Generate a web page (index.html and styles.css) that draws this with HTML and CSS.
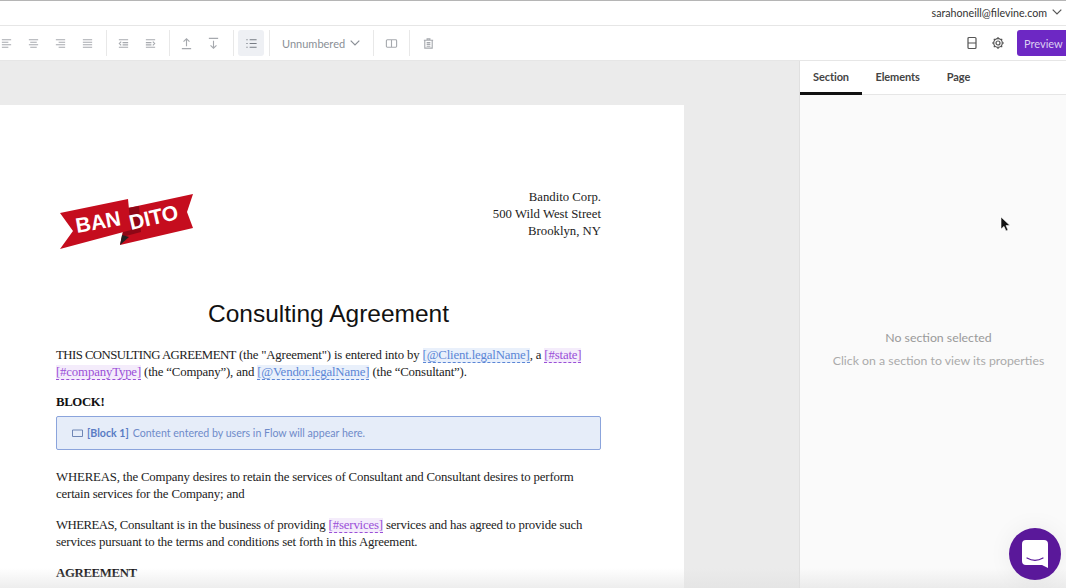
FILE: index.html
```html
<!DOCTYPE html>
<html lang="en">
<head>
<meta charset="utf-8">
<title>Consulting Agreement</title>
<link rel="stylesheet" href="styles.css">
</head>
<body>
<div class="app">
  <header class="topbar">
    <span class="email">sarahoneill@filevine.com</span>
    <svg class="caret-top" width="10" height="6" viewBox="0 0 10 6"><path d="M.7.7 5 5 9.3.7" fill="none" stroke="#555" stroke-width="1.2"/></svg>
  </header>
  <div class="toolbar">
    <div class="tool-group group-align">
      <svg class="ico" viewBox="0 0 14 14"><path d="M2 3h10M2 5.700h7M2 8.400h10M2 11h7"/></svg>
      <svg class="ico" viewBox="0 0 14 14"><path d="M2 3h10M3.500 5.700h7M2 8.400h10M3.500 11h7"/></svg>
      <svg class="ico" viewBox="0 0 14 14"><path d="M2 3h10M5 5.700h7M2 8.400h10M5 11h7"/></svg>
      <svg class="ico" viewBox="0 0 14 14"><path d="M2 3h10M2 5.700h10M2 8.400h10M2 11h10"/></svg>
    </div>
    <div class="tool-group group-indent">
      <svg class="ico" viewBox="0 0 14 14"><path d="M2 3h10M6 6h6M6 8.500h6M2 11h10M4.500 5 2.500 7l2 2"/></svg>
      <svg class="ico" viewBox="0 0 14 14"><path d="M2 3h10M2 6h6M2 8.500h6M2 11h10M9.500 5l2 2-2 2"/></svg>
    </div>
    <div class="tool-group group-move">
      <svg class="ico" viewBox="0 0 14 14"><path d="M2 12.500h10M7 10V2M3.800 5 7 2l3.200 3"/></svg>
      <svg class="ico" viewBox="0 0 14 14"><path d="M2 1.500h10M7 4v8M3.800 9 7 12l3.200-3"/></svg>
    </div>
    <div class="tool-group group-list">
      <span class="active-tool"><svg class="ico ico-list" viewBox="0 0 14 14"><path d="M5 3h7.500M5 7h7.500M5 11h7.500M1.500 3h1.300M1.500 7h1.300M1.500 11h1.300"/></svg></span>
    </div>
    <div class="tool-group group-number">
      <span class="number-label">Unnumbered</span>
      <svg width="10" height="6" viewBox="0 0 10 6"><path d="M.7.7 5 5 9.300.7" fill="none" stroke="#8a8f96" stroke-width="1.200"/></svg>
    </div>
    <div class="tool-group group-split">
      <svg class="ico" viewBox="0 0 14 14"><path d="M2.500 3h9a1 1 0 0 1 1 1v6a1 1 0 0 1-1 1h-9a1 1 0 0 1-1-1V4a1 1 0 0 1 1-1zM7 3v8"/></svg>
    </div>
    <div class="tool-group group-trash">
      <svg class="ico" viewBox="0 0 14 14"><path d="M3 3.500h8v8.500H3zM2 3.500h10M5.500 3.500V2h3v1.500M5 6h4M5 8h4M5 10h4"/></svg>
    </div>
    <div class="tool-right">
      <svg class="ico dark" viewBox="0 0 14 14"><path d="M4 1.500h6a1 1 0 0 1 1 1v9a1 1 0 0 1-1 1H4a1 1 0 0 1-1-1v-9a1 1 0 0 1 1-1zM3 7h8"/></svg>
      <svg class="ico dark" viewBox="0 0 14 14"><circle cx="7" cy="7" r="2"/><circle cx="7" cy="7" r="4.300"/><path d="M7 1v1.700M7 11.300V13M1 7h1.700M11.300 7H13M2.800 2.800 4 4M10 10l1.200 1.200M2.800 11.200 4 10M10 4l1.200-1.200"/></svg>
      <button class="preview" type="button">Preview</button>
    </div>
  </div>
  <div class="workspace">
    <main class="canvas">
      <article class="page">
        <div class="letterhead">
          <svg class="logo" width="136" height="58" viewBox="0 0 136 58">
            <path d="M69 14 134 0 128 18 134 34 61 51Z" fill="#c50d1e"/>
            <path d="M69 14 80 12 82 38 63 43Z" fill="#8e0716"/>
            <path d="M61 51 63 41 70 43Z" fill="#222"/>
            <path d="M1 19 69 5 72 36 1 55 14 37Z" fill="#c50d1e"/>
            <text class="logo-text" x="18" y="39" transform="rotate(-10 18 39)">BAN</text>
            <text class="logo-text" x="72" y="36" transform="rotate(-13 72 36)">DITO</text>
          </svg>
          <address class="company">Bandito Corp.<br>500 Wild West Street<br>Brooklyn, NY</address>
        </div>
        <h1 class="doc-title">Consulting Agreement</h1>
        <p class="para"><span class="caps">THIS CONSULTING AGREEMENT</span> (the "Agreement") is entered into by <span class="field-client">[@Client.legalName]</span>, a <span class="field-var">[#state]</span> <span class="field-var">[#companyType]</span> (the “Company”), and <span class="field-client">[@Vendor.legalName]</span> (the “Consultant”).</p>
        <h2 class="subhead">BLOCK!</h2>
        <div class="block">
          <svg class="block-ico" width="11" height="9" viewBox="0 0 11 9"><path d="M.5 1h10v6.500H.5z" fill="none" stroke="#6f86b5"/></svg>
          <span class="block-name">[Block 1]</span>
          <span>Content entered by users in Flow will appear here.</span>
        </div>
        <p class="para">WHEREAS, the Company desires to retain the services of Consultant and Consultant desires to perform certain services for the Company; and</p>
        <p class="para"><span class="caps">WHEREAS,</span> Consultant is in the business of providing <span class="field-var">[#services]</span> services and has agreed to provide such services pursuant to the terms and conditions set forth in this Agreement.</p>
        <h2 class="subhead">AGREEMENT</h2>
      </article>
    </main>
    <aside class="panel">
      <nav class="tabs">
        <span class="tab tab-active">Section</span>
        <span class="tab">Elements</span>
        <span class="tab">Page</span>
      </nav>
      <div class="empty">
        <p class="empty-title">No section selected</p>
        <p class="empty-sub">Click on a section to view its properties</p>
      </div>
    </aside>
  </div>
  <div class="bottom-fade"></div>
  <svg class="cursor" width="12" height="17" viewBox="0 0 12 17"><path d="M1 1v12l3-2.600 2 4.600 2-1-2-4.400h4z" fill="#111" stroke="#fff" stroke-width=".6"/></svg>
  <div class="chat">
    <svg width="26" height="28" viewBox="0 0 26 28"><path d="M4 0h18a4 4 0 0 1 4 4v24l-6-3H4a4 4 0 0 1-4-4V4a4 4 0 0 1 4-4z" fill="#fff"/><path d="M5 18c5 3 11 3 16 0" fill="none" stroke="#5a189a" stroke-width="1.200" stroke-linecap="round"/></svg>
  </div>
</div>
</body>
</html>
```
FILE: styles.css
```css
* { box-sizing: border-box; }
html, body { margin: 0; height: 100%; overflow: hidden; }
body { font-family: "Lato", "Liberation Sans", sans-serif; color: #333; background: #ebebeb; }
.app { position: relative; width: 1066px; height: 588px; display: flex; flex-direction: column; overflow: hidden; }

.topbar { height: 26px; flex: none; background: #fff; border-top: 1px solid #b5b5b5; border-bottom: 1px solid #e6e6e6; display: flex; align-items: center; justify-content: flex-end; padding: 0 4px 2px 0; gap: 5px; }
.email { font-size: 10.700px; color: #333; }

.toolbar { height: 35px; flex: none; background: #fff; border-bottom: 1px solid #e6e6e6; display: flex; align-items: center; }
.tool-group { height: 26px; display: flex; align-items: center; border-right: 1px solid #e8e8e8; }
.ico { width: 13px; height: 13px; fill: none; stroke: #a6a9ae; stroke-width: 1.200; flex: none; }
.ico.ico-list { stroke: #777c84; }
.ico.dark { stroke: #555; width: 14px; height: 14px; }
.group-align { width: 107px; gap: 14px; }
.group-indent { width: 63px; gap: 14px; padding-left: 10px; }
.group-move { width: 64px; gap: 14px; padding-left: 10px; }
.group-list { width: 36px; padding-left: 4px; }
.active-tool { width: 26px; height: 26px; background: #eef0f4; border-radius: 3px; display: flex; align-items: center; justify-content: center; }
.group-number { width: 104px; gap: 5px; padding-left: 12px; }
.number-label { font-size: 11px; color: #8a8f96; }
.group-split { width: 36px; padding-left: 11px; }
.group-trash { border-right: 0; padding-left: 12px; }
.tool-right { margin-left: auto; display: flex; align-items: center; gap: 12px; }
.preview { width: 49px; height: 26px; border: 0; border-radius: 3px 0 0 3px; background: #6d28c4; color: #dccff2; font: 11px "Lato", "Liberation Sans", sans-serif; text-align: left; padding: 0 0 0 7px; }

.workspace { flex: 1; display: flex; min-height: 0; }
.canvas { width: 800px; flex: none; padding-top: 44px; background: #ebebeb; border-right: 1px solid #e0e0e0; overflow: hidden; }
.page { width: 684px; height: 500px; background: #fff; padding: 84px 83px 0 56px; font-family: "Liberation Serif", serif; color: #222; }
.letterhead { display: flex; justify-content: space-between; align-items: flex-start; }
.logo { margin: 5px 0 0 3px; }
.logo-text { font: 700 21px "Liberation Sans", sans-serif; fill: #fff; }
.company { font-style: normal; text-align: right; font-size: 12.750px; line-height: 17px; }
.doc-title { font: 400 24.500px "Liberation Sans", sans-serif; color: #111; text-align: center; margin: 47px 0 0; line-height: 30px; }
.para { font-size: 12.800px; letter-spacing: -.16px; line-height: 17px; margin: 0 0 14px; }
.doc-title + .para { margin: 18px 0 13px; }
.caps { letter-spacing: -.55px; }
.subhead { font-size: 12.800px; letter-spacing: -.35px; line-height: 17px; font-weight: 700; margin: 0 0 5px; color: #111; }
.field-client { color: #5b86d6; background: #e9f0fb; border-bottom: 1px dashed #5b86d6; }
.field-var { color: #9a4fd8; background: #f4ecfb; border-bottom: 1px dashed #9a4fd8; }
.block { height: 34px; background: #e6edf9; border: 1px solid #8ba4dc; border-radius: 2px; display: flex; align-items: center; gap: 4px; padding-left: 15px; margin-bottom: 19px; font: 10.600px "Lato", "Liberation Sans", sans-serif; color: #6f8bc9; }
.block-name { color: #5a7cc4; font-weight: 700; }

.panel { flex: 1; background: #fafafa; display: flex; flex-direction: column; }
.tabs { height: 34px; flex: none; background: #fff; border-bottom: 1px solid #e6e6e6; display: flex; }
.tab { height: 34px; font-size: 11px; font-weight: 700; color: #444; display: flex; align-items: center; padding: 0 13.500px; border-bottom: 3px solid transparent; letter-spacing: -.1px; }
.tab-active { width: 62px; border-bottom-color: #111; justify-content: center; padding: 0; margin-right: 0; }
.empty { flex: 1; text-align: center; padding: 235px 0 0 11px; }
.empty-title { margin: 0 0 8px; font-size: 12.300px; line-height: 15px; color: #999; }
.empty-sub { margin: 0; font-size: 12.300px; line-height: 15px; color: #aaa; }

.bottom-fade { position: absolute; left: 0; right: 0; bottom: 0; height: 20px; background: linear-gradient(rgba(225,225,225,0), rgba(225,225,225,.6)); pointer-events: none; }
.cursor { position: absolute; left: 1000px; top: 216px; }
.chat { position: absolute; left: 1009px; top: 528px; width: 52px; height: 52px; border-radius: 50%; background: #5a189a; display: flex; align-items: center; justify-content: center; box-shadow: 0 0 24px rgba(0,0,0,.06); }
```
